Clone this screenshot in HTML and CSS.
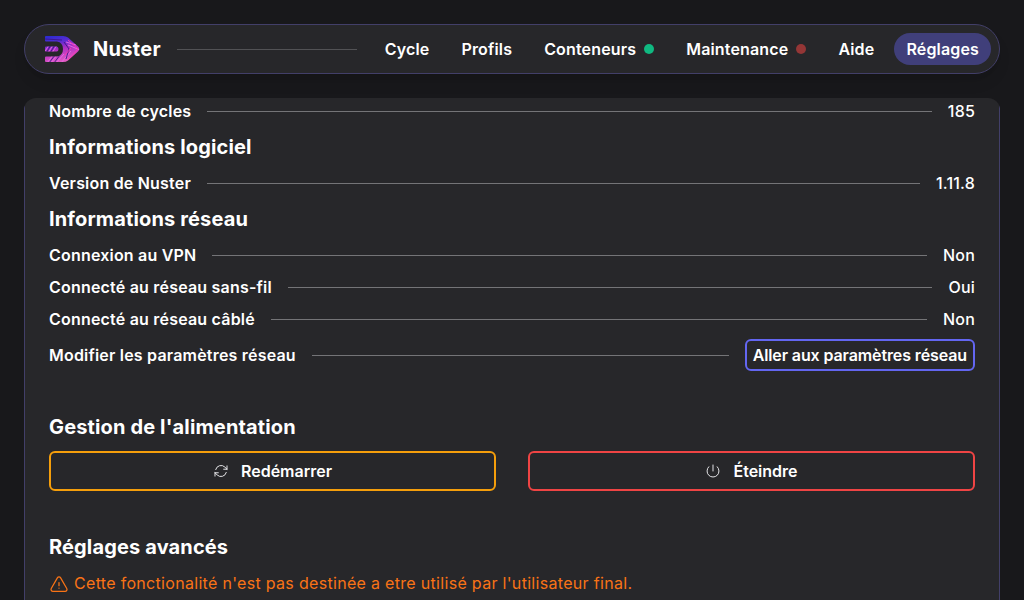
FILE: index.html
```html
<!DOCTYPE html>
<html lang="fr">
<head>
<meta charset="utf-8">
<title>Nuster</title>
<link rel="stylesheet" href="styles.css">
</head>
<body>
<header class="topbar">
  <svg class="logo" viewBox="0 0 36 28">
    <defs>
      <linearGradient id="ink" x1="0.3" y1="0" x2="0.6" y2="1">
        <stop offset="0" stop-color="#2c2bd0"/><stop offset=".25" stop-color="#5a2cd2"/><stop offset=".5" stop-color="#b02fc4"/><stop offset="1" stop-color="#ec62c4"/>
      </linearGradient>
      <clipPath id="mark"><path d="M2 1H19Q22 1 24 2.500L34 11.500Q36.500 14 34 16.500L24 25.500Q22 27 19 27H2Q1 27 1 26V22.500Q1 21.500 2 21.500H13Q19 20.500 19 14Q19 7.500 13 6.500H2Q1 6.500 1 5.500V2Q1 1 2 1ZM2 11.500H12.500Q14.500 11.500 14.500 14Q14.500 16.500 12.500 16.500H2Q1 16.500 1 15.500V12.500Q1 11.500 2 11.500Z"/></clipPath>
    </defs>
    <g clip-path="url(#mark)">
      <rect width="36" height="28" fill="url(#ink)"/>
      <g fill="none" stroke-width=".9">
        <path stroke="#e66be8" d="M0 18L5 10M4 18L9 10M8 18L13 10M3 28L9 20M7 28L13 20M12 28L20 19M17 28L27 16M24 10L36 15M22 7L32 10"/>
        <path stroke="#3b1689" d="M2 18L7 10M6 18L11 10M5 28L11 20M10 28L16 20M22 24L25 14L20 7M1 4L18 5"/>
        <path stroke="#ff38ae" d="M24 25L34 14L24 5M21 20L27 13"/>
      </g>
    </g>
  </svg>
  <span class="brand">Nuster</span>
  <span class="rule"></span>
  <nav class="nav">
    <a class="link">Cycle</a>
    <a class="link">Profils</a>
    <a class="link">Conteneurs<i class="dot ok"></i></a>
    <a class="link">Maintenance<i class="dot alert"></i></a>
    <a class="link">Aide</a>
    <a class="link active">Réglages</a>
  </nav>
</header>
<main class="viewport">
  <div class="panel">
    <div class="row"><span class="label">Nombre de cycles</span><span class="rule"></span><span class="value">185</span></div>
    <h2 class="title">Informations logiciel</h2>
    <div class="row"><span class="label">Version de Nuster</span><span class="rule"></span><span class="value">1.11.8</span></div>
    <h2 class="title">Informations réseau</h2>
    <div class="row"><span class="label">Connexion au VPN</span><span class="rule"></span><span class="value">Non</span></div>
    <div class="row"><span class="label">Connecté au réseau sans-fil</span><span class="rule"></span><span class="value">Oui</span></div>
    <div class="row"><span class="label">Connecté au réseau câblé</span><span class="rule"></span><span class="value">Non</span></div>
    <div class="row"><span class="label">Modifier les paramètres réseau</span><span class="rule"></span><button class="button small">Aller aux paramètres réseau</button></div>
    <h2 class="title section">Gestion de l'alimentation</h2>
    <div class="actions">
      <button class="button restart">
        <svg class="icon" viewBox="0 0 24 24"><path d="M16.023 9.348h4.992v-.001M2.985 19.644v-4.992m0 0h4.992m-4.993 0 3.181 3.183a8.250 8.250 0 0 0 13.803-3.700M4.031 9.865a8.250 8.250 0 0 1 13.803-3.700l3.181 3.182m0-4.991v4.990"/></svg>
        Redémarrer
      </button>
      <button class="button shutdown">
        <svg class="icon" viewBox="0 0 24 24"><path d="M5.636 5.636a9 9 0 1 0 12.728 0M12 3v9"/></svg>
        Éteindre
      </button>
    </div>
    <h2 class="title section">Réglages avancés</h2>
    <p class="warning">
      <svg class="warning-icon" viewBox="0 0 24 24"><path d="M12 9v3.750m-9.303 3.376c-.866 1.500.217 3.374 1.948 3.374h14.710c1.730 0 2.813-1.874 1.948-3.374L13.949 3.378c-.866-1.500-3.032-1.500-3.898 0L2.697 16.126ZM12 15.750h.007v.008H12v-.008Z"/></svg>
      Cette fonctionalité n'est pas destinée a etre utilisé par l'utilisateur final.
    </p>
  </div>
</main>
</body>
</html>
```
FILE: styles.css
```css
* { box-sizing: border-box; margin: 0; }
body {
  height: 600px;
  padding: 24px 24px 0;
  display: flex;
  flex-direction: column;
  gap: 24px;
  overflow: hidden;
  background: #18181b;
  color: #fff;
  font: 500 16px/24px Inter, sans-serif;
}
.topbar {
  height: 50px;
  flex: none;
  display: flex;
  align-items: center;
  padding: 0 8px 0 19px;
  border: 1px solid #423f69;
  border-radius: 25px;
  background: #27272a;
  box-shadow: 0 10px 15px -3px rgb(0 0 0 / 10%), 0 4px 6px -4px rgb(0 0 0 / 10%);
}
.logo { width: 36px; height: 28px; }
.brand { margin-left: 13px; font-size: 20px; font-weight: 700; line-height: 28px; letter-spacing: .3px; }
.rule { flex: 1; height: 1px; margin: 0 16px; background: #747477; }
.topbar .rule { background: #525255; }
.nav { display: flex; gap: 8px; }
.link {
  display: flex;
  align-items: center;
  gap: 8px;
  height: 32px;
  padding: 0 12px;
  border-radius: 16px;
  font-weight: 600;
  letter-spacing: .16px;
}
.active { background: #403f7a; }
.dot { width: 10px; height: 10px; border-radius: 50%; }
.ok { background: #10b981; }
.alert { background: #943636; }
.viewport { flex: 1; min-height: 0; overflow: hidden; border-radius: 12px 12px 0 0; }
.panel {
  display: flex;
  flex-direction: column;
  gap: 8px;
  padding: 1px 24px 24px;
  border: solid #423f69;
  border-width: 0 1px;
  background: #27272a;
}
.row { display: flex; align-items: center; }
.label { font-weight: 600; letter-spacing: .2px; }
.value { letter-spacing: .2px; }
.title { font-size: 20px; font-weight: 700; line-height: 32px; letter-spacing: .14px; }
.section { margin-top: 32px; }
.actions { display: grid; grid-template-columns: 1fr 1fr; gap: 32px; }
.button {
  display: flex;
  align-items: center;
  justify-content: center;
  gap: 12px;
  height: 40px;
  border: 2px solid #6366f1;
  border-radius: 6px;
  background: none;
  color: inherit;
  font: inherit;
  font-weight: 600;
}
.small { height: 32px; padding: 0 6px; letter-spacing: -.11px; }
.restart { border-color: #f59e0b; }
.shutdown { border-color: #ef4444; }
.icon { width: 16px; height: 16px; fill: none; stroke: #e4e4e7; stroke-width: 1.5; stroke-linecap: round; stroke-linejoin: round; }
.warning { display: flex; align-items: center; gap: 5px; color: #f97316; font-weight: 400; letter-spacing: .31px; }
.warning-icon { width: 20px; height: 20px; margin-top: 3px; fill: none; stroke: currentColor; stroke-width: 1.5; stroke-linecap: round; stroke-linejoin: round; }
```
